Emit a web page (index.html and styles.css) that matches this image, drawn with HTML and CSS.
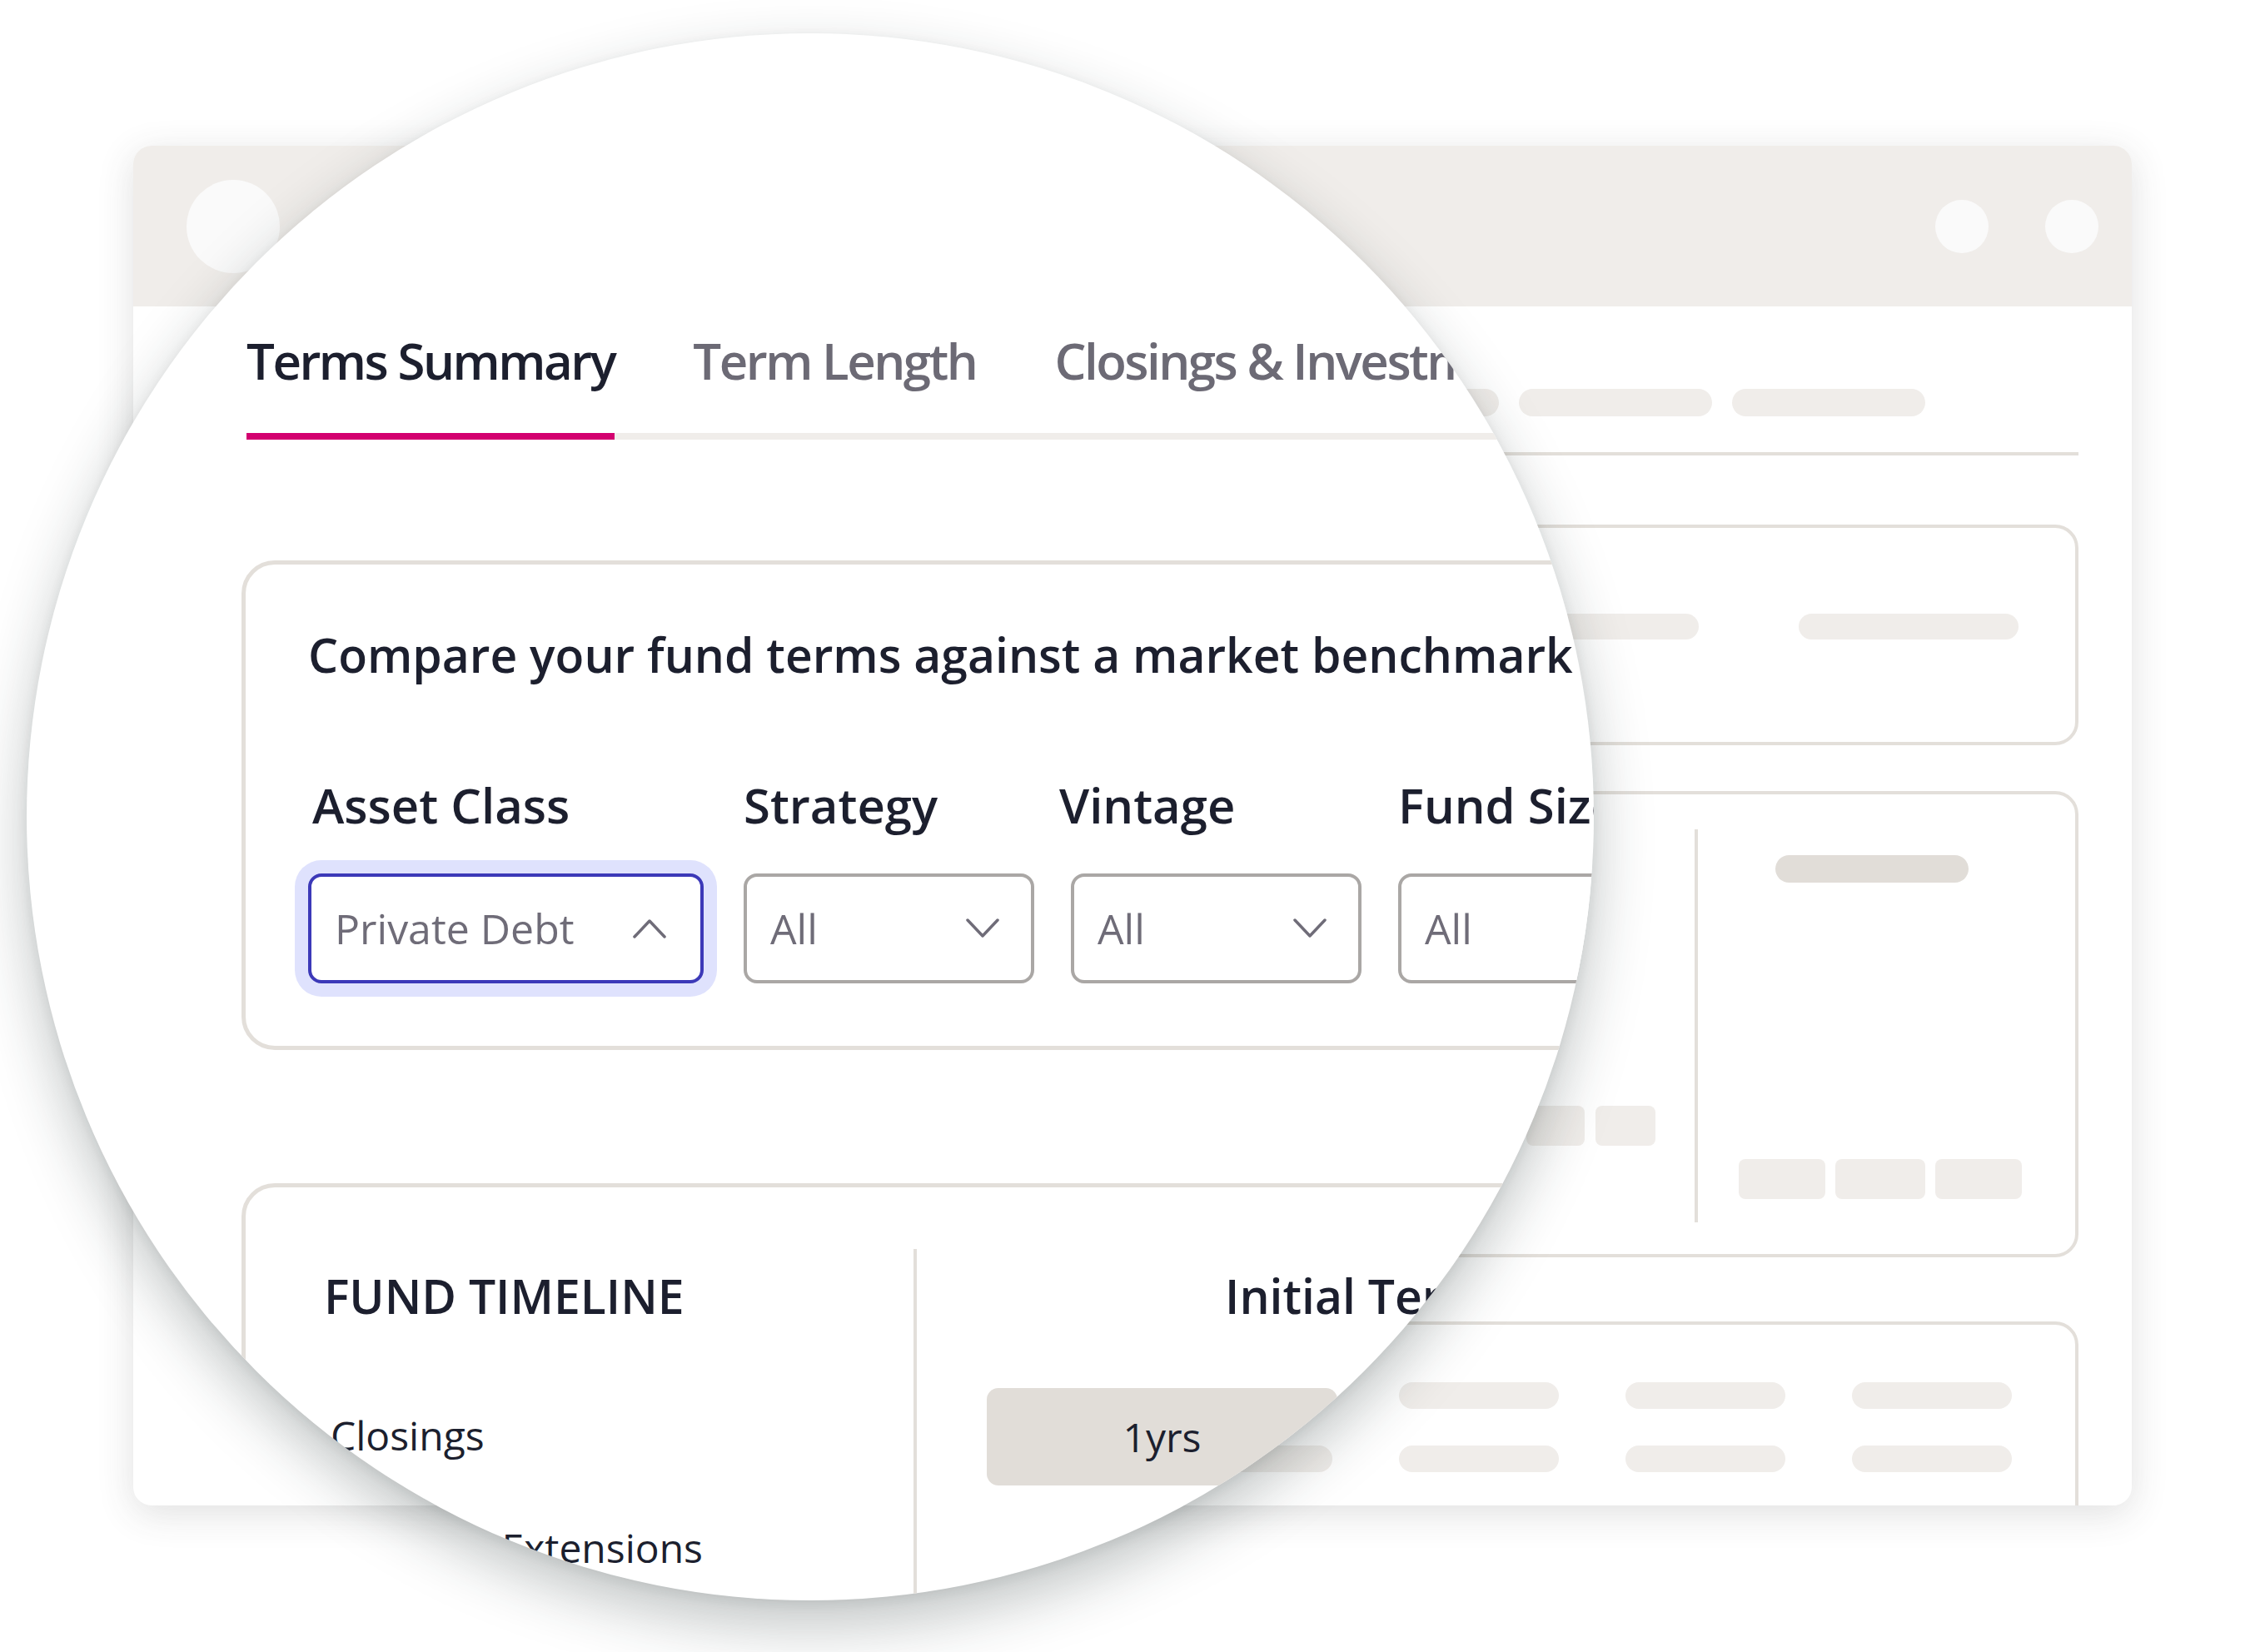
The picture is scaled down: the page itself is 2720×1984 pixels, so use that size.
FILE: index.html
```html
<!DOCTYPE html>
<html lang="en">
<head>
<meta charset="utf-8">
<title>Terms Summary</title>
<link rel="stylesheet" href="styles.css">
</head>
<body>
<div class="stage">
  <div class="window">
    <div class="titlebar">
      <div class="dot-lg"></div>
      <div class="dots"><div class="dot"></div><div class="dot"></div></div>
    </div>
    <div class="win-body">
      <div class="sk-tabs">
        <div class="pill"></div><div class="pill"></div><div class="pill"></div><div class="pill"></div><div class="pill"></div><div class="pill"></div>
      </div>
      <div class="sk-line"></div>
      <div class="sk-card sk-card1">
        <div class="pill"></div><div class="pill"></div>
      </div>
      <div class="sk-card sk-card2">
        <div class="sk2-left">
          <div class="box w70"></div><div class="box w72"></div>
        </div>
        <div class="sk2-div"></div>
        <div class="sk2-right">
          <div class="pill pill-dark"></div>
          <div class="sk2-boxes">
            <div class="box w104"></div><div class="box w108"></div><div class="box w104"></div>
          </div>
        </div>
      </div>
      <div class="sk-card sk-card3">
        <div class="pill"></div><div class="pill"></div><div class="pill"></div><div class="pill"></div>
        <div class="pill"></div><div class="pill"></div><div class="pill"></div><div class="pill"></div>
      </div>
    </div>
  </div>

  <div class="magnifier">
    <div class="mag-content">
      <div class="tabs">
        <div class="tab active">Terms Summary</div>
        <div class="tab">Term Length</div>
        <div class="tab">Closings &amp; Investments</div>
      </div>

      <div class="bench-card">
        <div class="bench-title">Compare your fund terms against a market benchmark</div>
        <div class="filters">
          <div class="filter filter-wide">
            <div class="filter-label lbl-asset">Asset Class</div>
            <div class="select focused">
              <span>Private Debt</span>
              <svg class="chev" width="40" height="24" viewBox="0 0 40 24"><polyline points="2,22 20,3 38,22" fill="none" stroke="#6f6c78" stroke-width="3.5" stroke-linecap="round" stroke-linejoin="round"/></svg>
            </div>
          </div>
          <div class="filter">
            <div class="filter-label">Strategy</div>
            <div class="select">
              <span>All</span>
              <svg class="chev" width="40" height="24" viewBox="0 0 40 24"><polyline points="2,2 20,21 38,2" fill="none" stroke="#6f6c78" stroke-width="3.5" stroke-linecap="round" stroke-linejoin="round"/></svg>
            </div>
          </div>
          <div class="filter">
            <div class="filter-label lbl-vintage">Vintage</div>
            <div class="select">
              <span>All</span>
              <svg class="chev" width="40" height="24" viewBox="0 0 40 24"><polyline points="2,2 20,21 38,2" fill="none" stroke="#6f6c78" stroke-width="3.5" stroke-linecap="round" stroke-linejoin="round"/></svg>
            </div>
          </div>
          <div class="filter">
            <div class="filter-label">Fund Size</div>
            <div class="select">
              <span>All</span>
              <svg class="chev" width="40" height="24" viewBox="0 0 40 24"><polyline points="2,2 20,21 38,2" fill="none" stroke="#6f6c78" stroke-width="3.5" stroke-linecap="round" stroke-linejoin="round"/></svg>
            </div>
          </div>
        </div>
      </div>

      <div class="timeline-card">
        <div class="tl-left">
          <div class="tl-heading">FUND TIMELINE</div>
          <div class="tl-item first">Closings</div>
          <div class="tl-item">Optional Extensions</div>
        </div>
        <div class="tl-div"></div>
        <div class="tl-right">
          <div class="tl-heading tl-heading-right">Initial Term</div>
          <div class="year-btn">1yrs</div>
        </div>
      </div>
    </div>
  </div>
</div>
</body>
</html>
```

FILE: styles.css
```css
* { box-sizing: border-box; }

body {
  margin: 0;
  background: #ffffff;
  font-family: "Open Sans", "Noto Sans", sans-serif;
}

.stage {
  position: relative;
  width: 2720px;
  height: 1984px;
  overflow: hidden;
  padding: 175px 0 0 160px;
}

/* background window */
.window {
  width: 2400px;
  height: 1633px;
  background: #ffffff;
  border-radius: 22px;
  box-shadow: 0 10px 44px rgba(60, 64, 64, 0.16);
  overflow: hidden;
}

.titlebar {
  height: 193px;
  background: #f0edea;
  display: flex;
  align-items: center;
  justify-content: space-between;
  padding: 0 40px 0 64px;
}

.dot-lg {
  width: 112px;
  height: 112px;
  border-radius: 50%;
  background: #fafafa;
}

.dots {
  display: flex;
  gap: 68px;
}

.dot {
  width: 64px;
  height: 64px;
  border-radius: 50%;
  background: #fafafa;
}

.win-body {
  padding: 99px 64px 0;
}

.pill {
  height: 33px;
  border-radius: 17px;
  background: #f0edea;
}

.pill-dark {
  background: #e1ddd8;
}

.sk-tabs {
  display: flex;
  justify-content: flex-end;
  gap: 24px;
  padding-right: 184px;
}

.sk-tabs .pill {
  width: 232px;
}

.sk-line {
  height: 4px;
  background: #e3dfda;
  margin-top: 43px;
}

.sk-card {
  border: 4px solid #e3dfda;
  border-radius: 28px;
}

.sk-card1 {
  margin-top: 83px;
  height: 265px;
  display: flex;
  justify-content: flex-end;
  align-items: flex-start;
  gap: 120px;
  padding: 103px 68px 0 0;
}

.sk-card1 .pill {
  width: 264px;
  height: 31px;
}

.sk-card2 {
  margin-top: 55px;
  height: 560px;
  display: flex;
  align-items: flex-start;
}

.sk2-left {
  flex: 1;
  display: flex;
  justify-content: flex-end;
  gap: 13px;
  padding: 374px 47px 0 0;
}

.box {
  height: 48px;
  border-radius: 8px;
  background: #f0edea;
}

.w70 { width: 70px; }
.w72 { width: 72px; }
.w104 { width: 104px; }
.w108 { width: 108px; }

.sk2-div {
  width: 4px;
  height: 472px;
  margin-top: 42px;
  background: #e3dfda;
}

.sk2-right {
  width: 453px;
  padding-top: 73px;
}

.sk2-right .pill {
  width: 232px;
  margin-left: 93px;
}

.sk2-boxes {
  display: flex;
  gap: 12px;
  margin: 332px 0 0 49px;
}

.sk-card3 {
  margin-top: 77px;
  margin-left: 900px;
  height: 400px;
  display: grid;
  grid-template-columns: repeat(4, 192px);
  column-gap: 80px;
  row-gap: 44px;
  justify-content: end;
  align-content: start;
  padding: 69px 76px 0 0;
}

.sk-card3 .pill {
  height: 32px;
}

/* magnifier lens */
.magnifier {
  position: absolute;
  left: 32px;
  top: 40px;
  width: 1882px;
  height: 1882px;
  border-radius: 50%;
  background: #ffffff;
  overflow: hidden;
  box-shadow: 0 30px 70px rgba(30, 42, 42, 0.28), 0 4px 14px rgba(30, 42, 42, 0.08);
}

.mag-content {
  width: 2300px;
  padding: 351px 0 0 258px;
  color: #1c1f2e;
}

.tabs {
  display: flex;
  gap: 94px;
  margin-left: 6px;
  border-bottom: 8px solid #f0edea;
}

.tab {
  font-size: 60px;
  font-weight: 600;
  line-height: 84px;
  letter-spacing: -2.5px;
  color: #6c6a75;
  white-space: nowrap;
  padding-bottom: 45px;
  margin-bottom: -8px;
  border-bottom: 8px solid transparent;
}

.tab.active {
  color: #1c1f2e;
  border-bottom-color: #d3006f;
}

.bench-card {
  margin-top: 145px;
  border: 5px solid #e3dfda;
  border-radius: 40px;
  padding: 70px 0 75px 75px;
}

.bench-title {
  font-size: 57px;
  font-weight: 600;
  line-height: 76px;
  white-space: nowrap;
}

.filters {
  display: flex;
  gap: 44px;
  margin-top: 104px;
}

.filter {
  display: flex;
  flex-direction: column;
  gap: 43px;
}

.filter-wide {
  margin-right: 4px;
}

.filter-label {
  font-size: 58px;
  font-weight: 600;
  line-height: 78px;
  white-space: nowrap;
}

.lbl-asset { margin-left: 5px; }
.lbl-vintage { margin-left: -14px; }

.select {
  width: 349px;
  height: 132px;
  border: 4px solid #aaa7a5;
  border-radius: 16px;
  display: flex;
  align-items: center;
  justify-content: space-between;
  padding: 0 38px 0 28px;
  font-size: 50px;
  line-height: 60px;
  color: #6f6c78;
  background: #ffffff;
}

.filter-wide .select {
  width: 475px;
  padding: 0 41px 0 28px;
}

.select.focused {
  border-color: #3c39b8;
  box-shadow: 0 0 0 16px #dfe2fd;
}

.chev {
  display: block;
  flex: none;
}

.timeline-card {
  margin-top: 160px;
  border: 5px solid #e3dfda;
  border-radius: 40px;
  height: 800px;
  display: flex;
}

.tl-left {
  width: 802px;
  padding: 92px 0 0 94px;
}

.tl-heading {
  font-size: 57px;
  font-weight: 600;
  line-height: 76px;
  white-space: nowrap;
}

.tl-item {
  font-size: 48px;
  font-weight: 500;
  line-height: 66px;
  margin-top: 69px;
  padding-left: 8px;
  white-space: nowrap;
}

.tl-item.first {
  margin-top: 97px;
}

.tl-div {
  width: 4px;
  margin-top: 74px;
  background: #e3dfda;
}

.tl-right {
  padding: 92px 0 0 84px;
}

.tl-heading-right {
  padding-left: 286px;
}

.year-btn {
  margin-top: 73px;
  width: 421px;
  height: 117px;
  border-radius: 14px;
  background: #e1ddd8;
  display: flex;
  align-items: center;
  justify-content: center;
  font-size: 48px;
  font-weight: 500;
  line-height: 66px;
}
```
